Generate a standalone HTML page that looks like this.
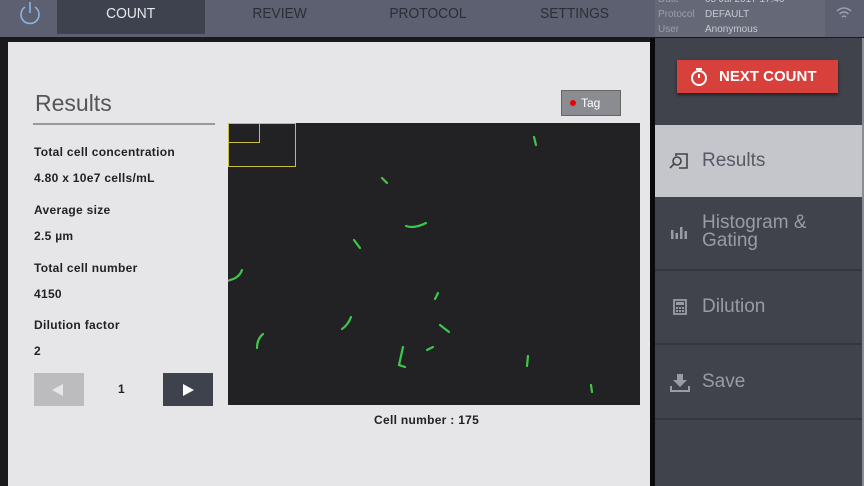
<!DOCTYPE html><html><head><style>
body{margin:0;width:864px;height:486px;overflow:hidden;background:#1a1a1c;font-family:"Liberation Sans",sans-serif;position:relative}
.top{position:absolute;left:0;top:0;width:864px;height:37px;background:#5c6070}
.tab{position:absolute;top:0;height:34px;line-height:28px;color:#2b2e36;font-size:15px;text-align:center}
.tab span{display:inline-block;transform:scaleX(.92)}
.main{position:absolute;left:8px;top:42px;width:642px;height:444px;background:#e6e6e8}
.side{position:absolute;left:655px;top:38px;width:207px;height:448px;background:#40434c}
.lab{position:absolute;left:34px;font-size:12px;font-weight:bold;color:#222;letter-spacing:.3px}
.item{position:absolute;left:0;width:207px;color:#9a9ca4;font-size:19px}
.sep{position:absolute;left:0;width:207px;height:2px;background:#34363d}
</style></head><body>
<div class="top"></div>
<svg style="position:absolute;left:17px;top:1px" width="26" height="26" viewBox="0 0 26 26"><path d="M8 6A9 9 0 1 0 18 6" fill="none" stroke="#8cb4e0" stroke-width="1.6"/><line x1="13" y1="1" x2="13" y2="12" stroke="#8cb4e0" stroke-width="1.6"/></svg>
<div class="tab" style="left:57px;width:148px;background:#3e424e;color:#e8e8ea"><span>COUNT</span></div>
<div class="tab" style="left:240px;width:80px"><span>REVIEW</span></div>
<div class="tab" style="left:380px;width:95px"><span>PROTOCOL</span></div>
<div class="tab" style="left:530px;width:90px"><span>SETTINGS</span></div>
<div style="position:absolute;left:655px;top:0;width:170px;height:37px;background:#646877;font-size:10px;color:#9ca0ac;line-height:15px;overflow:hidden">
<div style="position:absolute;left:3px;top:-8px">Date<br>Protocol<br>User</div>
<div style="position:absolute;left:50px;top:-8px;color:#c8cad2">05 Jul 2017 17:40<br>DEFAULT<br>Anonymous</div></div>
<svg style="position:absolute;left:835px;top:6px" width="18" height="14" viewBox="0 0 18 14"><g fill="none" stroke="#9ca0ac" stroke-width="1.5"><path d="M2 5q7-6 14 0M4.5 8q4.5-4 9 0M7 11q2-2 4 0"/></g></svg>
<div class="main">
<div style="position:absolute;left:27px;top:48px;font-size:23px;color:#555">Results</div>
<div style="position:absolute;left:25px;top:81px;width:182px;height:2px;background:#999"></div>
<div style="position:absolute;left:553px;top:48px;width:58px;height:24px;background:#8a8c92;border:1px solid #666;color:#fff;font-size:12px;line-height:24px"><span style="display:inline-block;width:6px;height:6px;border-radius:3px;background:#e00;margin:0 5px 1px 8px"></span>Tag</div>
<div style="position:absolute;left:26px;top:331px;width:50px;height:33px;background:#bcbcbe"><div style="margin:11px 0 0 18px;width:0;height:0;border-top:6px solid transparent;border-bottom:6px solid transparent;border-right:11px solid #e6e6e8"></div></div>
<div style="position:absolute;left:110px;top:340px;font-size:12px;font-weight:bold;color:#222">1</div>
<div style="position:absolute;left:155px;top:331px;width:50px;height:33px;background:#3e424c"><div style="margin:11px 0 0 20px;width:0;height:0;border-top:6px solid transparent;border-bottom:6px solid transparent;border-left:11px solid #fff"></div></div>
<div style="position:absolute;left:366px;top:371px;font-size:12px;font-weight:bold;color:#222;letter-spacing:.3px">Cell number : 175</div>
</div>
<div class="lab" style="top:145px">Total cell concentration</div>
<div class="lab" style="top:171px">4.80 x 10e7 cells/mL</div>
<div class="lab" style="top:203px">Average size</div>
<div class="lab" style="top:229px">2.5 µm</div>
<div class="lab" style="top:261px">Total cell number</div>
<div class="lab" style="top:287px">4150</div>
<div class="lab" style="top:318px">Dilution factor</div>
<div class="lab" style="top:344px">2</div>
<svg style="position:absolute;left:228px;top:123px" width="412" height="282" viewBox="0 0 412 282">
<rect width="412" height="282" fill="#222224"/>
<rect x="0.5" y="0.5" width="67" height="43" fill="none" stroke="#c8c040"/>
<rect x="0.5" y="0.5" width="31" height="19" fill="none" stroke="#c8c040"/>
<g fill="none" stroke="#3cc84a" stroke-width="2.2" stroke-linecap="round">
<path d="M306 14l2 8"/><path d="M154 55l5 5"/><path d="M178 103q8 3 20-3"/><path d="M126 117l6 8"/><path d="M14 147q-3 8-12 10"/><path d="M210 170l-3 6"/><path d="M212 202l9 7"/><path d="M123 194q-3 8-9 12"/><path d="M35 211q-6 5-6 14"/><path d="M175 224l-4 18l6 2"/><path d="M205 224l-6 3"/><path d="M300 233l-1 10"/><path d="M363 262l1 7"/></g>
<path d="M2 157l-2 1" stroke="#a8a" stroke-width="2"/></svg>
<div style="position:absolute;left:650px;top:38px;width:5px;height:448px;background:#0a0a0a"></div>
<div style="position:absolute;left:862px;top:38px;width:2px;height:448px;background:#8a8c92"></div>
<div class="side">
<div style="position:absolute;left:22px;top:22px;width:161px;height:33px;background:#d8403c;color:#fff;font-weight:bold;font-size:15px;line-height:34px;box-shadow:0 2px 3px #222"><svg style="position:absolute;left:13px;top:8px" width="18" height="18" viewBox="0 0 18 18"><circle cx="9" cy="10" r="7" fill="none" stroke="#fff" stroke-width="2"/><path d="M6 1h6M9 10V6" stroke="#fff" stroke-width="2"/></svg><span style="position:absolute;left:42px">NEXT COUNT</span></div>
<div style="position:absolute;left:0;top:87px;width:207px;height:72px;background:#c4c6cc"></div>
<div class="item" style="top:112px;color:#555a64"><svg style="position:absolute;left:14px;top:3px" width="20" height="18" viewBox="0 0 20 18"><g fill="none" stroke="#444" stroke-width="1.6"><path d="M7 3V1h11v14H10"/><circle cx="8" cy="8" r="4"/><path d="M5 11l-4 4"/></g></svg><span style="position:absolute;left:47px">Results</span></div>
<div class="item" style="top:176px;line-height:18px"><svg style="position:absolute;left:16px;top:11px" width="16" height="14" viewBox="0 0 16 14"><g fill="#9a9ca4"><rect x="0" y="5" width="2.5" height="9"/><rect x="4.5" y="8" width="2.5" height="6"/><rect x="9" y="2" width="2.5" height="12"/><rect x="13.5" y="6" width="2.5" height="8"/></g></svg><span style="position:absolute;left:47px">Histogram &amp;<br>Gating</span></div>
<div class="sep" style="top:231px"></div>
<div class="item" style="top:258px"><svg style="position:absolute;left:18px;top:3px" width="14" height="16" viewBox="0 0 14 16"><rect x="1" y="1" width="12" height="14" fill="none" stroke="#9a9ca4" stroke-width="1.8"/><rect x="3" y="3" width="8" height="3" fill="#9a9ca4"/><g fill="#9a9ca4"><rect x="3" y="8" width="2" height="2"/><rect x="6" y="8" width="2" height="2"/><rect x="9" y="8" width="2" height="2"/><rect x="3" y="11" width="2" height="2"/><rect x="6" y="11" width="2" height="2"/><rect x="9" y="11" width="2" height="2"/></g></svg><span style="position:absolute;left:47px">Dilution</span></div>
<div class="sep" style="top:305px"></div>
<div class="item" style="top:333px"><svg style="position:absolute;left:15px;top:3px" width="20" height="18" viewBox="0 0 20 18"><path d="M7 0h6v6h4l-7 7l-7-7h4z" fill="#9a9ca4"/><path d="M1 12v5h18v-5" fill="none" stroke="#9a9ca4" stroke-width="2"/></svg><span style="position:absolute;left:47px">Save</span></div>
<div class="sep" style="top:380px"></div>
</div>
</body></html>
